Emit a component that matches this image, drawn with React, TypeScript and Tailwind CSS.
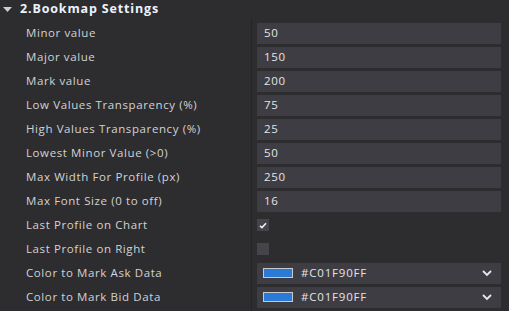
import React from "react";

const rows: { label: string; kind: "text" | "check" | "color"; value?: string; checked?: boolean }[] = [
  { label: "Minor value", kind: "text", value: "50" },
  { label: "Major value", kind: "text", value: "150" },
  { label: "Mark value", kind: "text", value: "200" },
  { label: "Low Values Transparency (%)", kind: "text", value: "75" },
  { label: "High Values Transparency (%)", kind: "text", value: "25" },
  { label: "Lowest Minor Value (>0)", kind: "text", value: "50" },
  { label: "Max Width For Profile (px)", kind: "text", value: "250" },
  { label: "Max Font Size (0 to off)", kind: "text", value: "16" },
  { label: "Last Profile on Chart", kind: "check", checked: true },
  { label: "Last Profile on Right", kind: "check", checked: false },
  { label: "Color to Mark Ask Data", kind: "color", value: "#C01F90FF" },
  { label: "Color to Mark Bid Data", kind: "color", value: "#C01F90FF" },
];

export default function App() {
  return (
    <div
      className="w-[509px] h-[311px] bg-[#2d2d30] text-[#d6d6d8] overflow-hidden"
      style={{ fontFamily: '"Open Sans", "Noto Sans", sans-serif' }}
    >
      <div className="h-[19px] flex items-center">
        <svg width="9" height="6" viewBox="0 0 9 6" className="ml-[3px] mt-[1px]">
          <polygon points="0,0 9,0 4.5,5" fill="#cfcfd2" />
        </svg>
        <span className="ml-[8px] text-[12.5px] font-bold text-[#eef2ff] tracking-[0.85px]">2.Bookmap Settings</span>
      </div>
      <div className="flex">
        <div className="w-[251px] flex flex-col pt-[2px]">
          {rows.map((r) => (
            <div key={r.label} className="h-[24px] flex items-center pl-[26px] text-[11.5px] tracking-[0.6px] text-[#d2d2d4]">
              {r.label}
            </div>
          ))}
        </div>
        <div className="w-[1px] bg-[#252528] h-[292px]" />
        <div className="flex-1 flex flex-col pt-[2px] pl-[5px] pr-[8px]">
          {rows.map((r) => (
            <div key={r.label} className="h-[24px] flex items-center">
              {r.kind === "text" && (
                <div className="h-[21px] w-full bg-[#3e3d44] flex items-center pl-[7px] text-[11.5px] tracking-[0.7px] text-[#e4e4e6]">
                  {r.value}
                </div>
              )}
              {r.kind === "check" && (
                <div className="w-[12px] h-[12px] bg-[#45444b] flex items-center justify-center">
                  {r.checked && (
                    <svg width="8" height="7" viewBox="0 0 8 7">
                      <path d="M1 3.8 L3 5.6 L7 1.2" stroke="#f0f0f2" strokeWidth="1.6" fill="none" />
                    </svg>
                  )}
                </div>
              )}
              {r.kind === "color" && (
                <div className="h-[21px] w-full bg-[#3e3d44] flex items-center pl-[6px] pr-[9px] text-[11.5px] tracking-[0.8px] text-[#e4e4e6]">
                  <div className="w-[30px] h-[10px] bg-[#2a7bd8] border border-[#c8c8cc]" />
                  <span className="ml-[8px] flex-1">{r.value}</span>
                  <svg width="10" height="7" viewBox="0 0 10 7">
                    <path d="M1 1 L5 5 L9 1" stroke="#e8e8ea" strokeWidth="1.8" fill="none" />
                  </svg>
                </div>
              )}
            </div>
          ))}
        </div>
      </div>
    </div>
  );
}
